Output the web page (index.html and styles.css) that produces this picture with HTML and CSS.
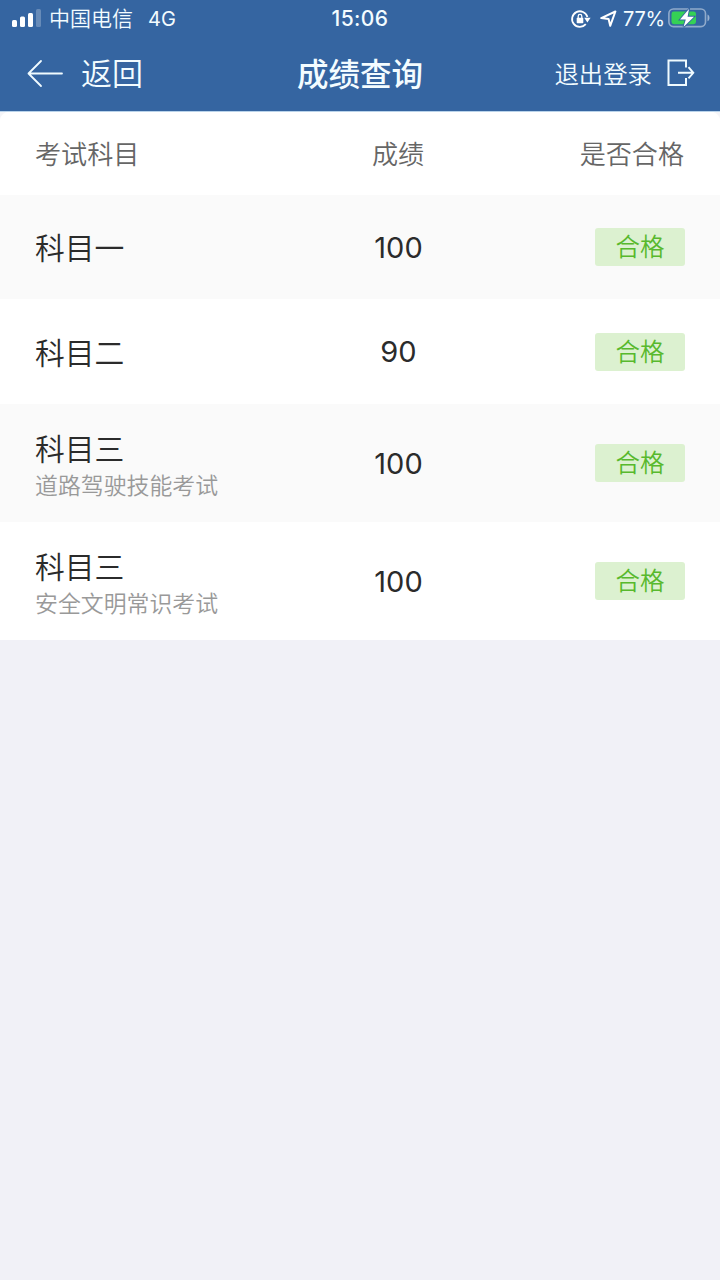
FILE: index.html
```html
<!DOCTYPE html>
<html lang="zh-CN">
<head>
<meta charset="utf-8">
<title>成绩查询</title>
<link rel="stylesheet" href="styles.css">
</head>
<body>
<header class="header">
  <div class="status">
    <div class="status-left">
      <svg class="signal" width="30" height="18" viewBox="0 0 30 18" fill="#fff">
        <rect x="0" y="10" width="5" height="7" rx="1.5"/>
        <rect x="8" y="6.500" width="5" height="10.500" rx="1.5"/>
        <rect x="16" y="3" width="5" height="14" rx="1.5"/>
        <rect x="24" y="-1" width="5" height="18" rx="1.5" opacity=".25"/>
      </svg>
      <span class="carrier">中国电信</span>
      <span class="network">4G</span>
    </div>
    <time class="clock">15:06</time>
    <div class="status-right">
      <svg class="lock" width="20" height="18" viewBox="0 0 20 18" fill="none" stroke="#fff" stroke-width="1.8">
        <path d="M14.800 14.200A7.800 7.800 0 1 1 16.400 7"/>
        <path d="M13.200 7.800h6.400l-3.200 4.600z" fill="#fff" stroke="none"/>
        <rect x="5.700" y="7.800" width="6.600" height="5.400" rx=".7" fill="#fff" stroke="none"/>
        <path d="M7.200 8.200V6.200a1.800 1.800 0 0 1 3.600 0v2" stroke-width="1.3"/>
      </svg>
      <svg class="location" width="17" height="18" viewBox="0 0 17 18" fill="none" stroke="#fff" stroke-width="2" stroke-linejoin="round">
        <path d="M1.200 8.100 15.400 1.500 10.200 15.800 8.600 9z"/>
      </svg>
      <span class="percent">77%</span>
      <svg class="battery" width="43" height="20" viewBox="0 0 43 20">
        <rect x=".9" y="0" width="36.6" height="17.600" rx="4.5" fill="none" stroke="#fff" stroke-opacity=".45" stroke-width="1.6"/>
        <path d="M39.5 5.500c2.6 1 2.6 5.8 0 6.8z" fill="#fff" fill-opacity=".5"/>
        <rect x="3.5" y="2.600" width="24.5" height="12.6" rx="2.4" fill="#35d155"/>
        <path d="M21 0 12 10.500h5.800L15.500 18 26 7.700h-6.400z" fill="#fff" stroke="#3565a1" stroke-width="1.8" paint-order="stroke"/>
      </svg>
    </div>
  </div>
  <nav class="nav">
    <a class="back">
      <svg width="36" height="28" viewBox="0 0 36 28" fill="none" stroke="#f0fbff" stroke-width="1.8" stroke-linecap="round" stroke-linejoin="round">
        <path d="M14 2 1.500 14.500 14 27M1.500 14.500H35"/>
      </svg>
      <span class="nav-label">返回</span>
    </a>
    <h1 class="title">成绩查询</h1>
    <a class="logout">
      <span class="nav-label">退出登录</span>
      <svg width="28" height="28" viewBox="0 0 28 28" fill="none" stroke="#f0fbff" stroke-width="2">
        <path d="M19 8.500V1.500H1.500v24.500h17.500v-7"/>
        <path d="M11 13.800h15M21.500 8.200l4.800 5.600-4.800 5.600" stroke-width="1.900"/>
      </svg>
    </a>
  </nav>
</header>
<main class="results">
  <div class="row head">
    <span>考试科目</span><span class="score-head">成绩</span><span class="pass-head">是否合格</span>
  </div>
  <div class="row shaded first">
    <div class="subject">科目一</div><div class="score">100</div><div class="badge">合格</div>
  </div>
  <div class="row second">
    <div class="subject">科目二</div><div class="score">90</div><div class="badge">合格</div>
  </div>
  <div class="row shaded detailed">
    <div class="subject">科目三<small class="note">道路驾驶技能考试</small></div><div class="score">100</div><div class="badge">合格</div>
  </div>
  <div class="row detailed">
    <div class="subject">科目三<small class="note">安全文明常识考试</small></div><div class="score">100</div><div class="badge">合格</div>
  </div>
</main>
</body>
</html>
```
FILE: styles.css
```css
* { box-sizing: border-box; }

body {
  margin: 0;
  min-height: 1280px;
  background: #f1f1f7;
  font-family: Inter, "Noto Sans CJK SC", sans-serif;
  font-weight: 350;
  color: #2b2b2b;
}

svg { display: block; flex: none; overflow: visible; }

.header {
  height: 112px;
  background: #3565a1;
  border-bottom: 1px solid #b9d3ea;
  color: #f3fcff;
}

.status {
  display: grid;
  grid-template-columns: 1fr auto 1fr;
  align-items: center;
  height: 37px;
  padding: 0 9px 0 12px;
  font-size: 20px;
  line-height: 36px;
  font-weight: 400;
}

.status-left, .status-right { display: flex; align-items: center; }
.status-right { justify-content: flex-end; }
.carrier { margin-left: 7px; font-size: 21px; font-weight: 350; }
.network { margin-left: 15px; }
.clock { font-weight: 500; font-size: 21px; letter-spacing: .4px; margin-right: 3px; }
.location { margin-left: 9px; }
.percent { margin-left: 6px; letter-spacing: -.2px; }
.battery { margin-left: 3px; }

.nav {
  display: grid;
  grid-template-columns: 1fr auto 1fr;
  align-items: center;
  height: 73px;
  padding: 0 25px 0 27px;
}

.back, .logout { display: flex; align-items: center; height: 73px; }
.back { font-size: 31px; gap: 18px; padding-bottom: 1px; }
.nav-label { padding-bottom: 2px; }
.back .nav-label { padding-bottom: 3px; }
.title { margin: 0 2px 0 0; padding-bottom: 4px; font-size: 31.500px; font-weight: 500; }
.logout { justify-content: flex-end; gap: 15px; padding-bottom: 1px; font-size: 24.400px; }

.results {
  background: #fff;
}

.row {
  display: grid;
  grid-template-columns: 288px 150px 1fr;
  align-items: center;
  padding: 0 35px;
}

.head {
  height: 83px;
  padding-bottom: 2px;
  background: radial-gradient(circle at 10px 10px, transparent 10px, #f5f5f8 11px) left top / 10px 10px no-repeat,
    radial-gradient(circle at 0 10px, transparent 10px, #f5f5f8 11px) right top / 10px 10px no-repeat;
  font-size: 26.100px;
  color: #666;
}
.score-head { text-align: center; }
.pass-head { text-align: right; margin-right: 1px; }
.first { height: 104px; }
.second { height: 105px; }
.detailed { height: 118px; }
.shaded { background: #fafafa; }

.subject { padding-top: 2px; font-size: 29.800px; line-height: 40px; }
.detailed .subject { padding-top: 6px; }
.note {
  display: block;
  font-size: 22.900px;
  line-height: 34px;
  color: #999;
}

.score { padding-left: 1px; font-size: 29px; font-weight: 400; text-align: center; }

.badge {
  justify-self: end;
  width: 90px;
  height: 38px;
  border-radius: 3px;
  background: #dcf1d0;
  color: #58b92d;
  font-size: 24.500px;
  line-height: 39px;
  text-align: center;
}
```
